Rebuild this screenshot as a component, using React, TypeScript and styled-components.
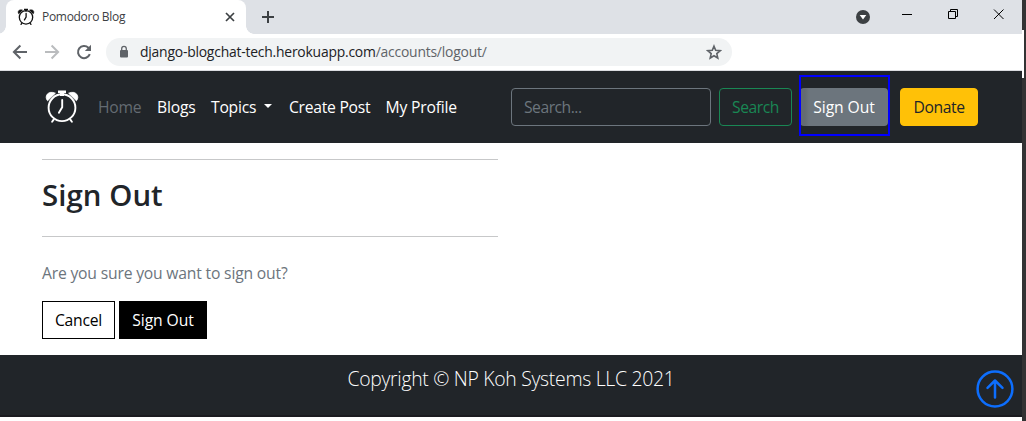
import React from "react";
import styled, { createGlobalStyle, css } from "styled-components";

const GlobalStyle = createGlobalStyle`
  *, *::before, *::after { box-sizing: border-box; }
  body {
    margin: 0;
    overflow: hidden;
    background: #333334;
    color: #212529;
    font-family: "Segoe UI", "Open Sans", "Noto Sans", sans-serif;
    font-size: 15.7px;
    line-height: 24px;
    letter-spacing: -0.2px;
  }
  button, input { font: inherit; letter-spacing: inherit; }
`;

const Desktop = styled.div`
  position: relative;
  width: 1026px;
  height: 421px;
  overflow: hidden;
  background: #333334;
`;

const BrowserWindow = styled.div`
  width: 1022px;
  height: 421px;
  display: flex;
  flex-direction: column;
  background: #fff;
`;

const WindowEdge = styled.div`
  position: absolute;
  top: 30px;
  left: 1022px;
  width: 2px;
  height: 48px;
  background: #fff;
`;

const TabStrip = styled.div`
  height: 34px;
  flex: none;
  display: flex;
  align-items: flex-start;
  background: #dee1e6;
`;

const Tab = styled.div`
  position: relative;
  width: 240px;
  height: 34px;
  margin-left: 6px;
  padding: 0 10px 0 11px;
  display: flex;
  align-items: center;
  background: #fff;
  border-radius: 8px 8px 0 0;
  &::before, &::after {
    content: "";
    position: absolute;
    bottom: 0;
    width: 8px;
    height: 8px;
  }
  &::before {
    left: -8px;
    background: radial-gradient(circle at 0 0, #dee1e6 7.5px, #fff 8px);
  }
  &::after {
    right: -8px;
    background: radial-gradient(circle at 100% 0, #dee1e6 7.5px, #fff 8px);
  }
`;

const TabTitle = styled.span`
  flex: 1;
  margin-left: 7px;
  font-size: 12px;
  letter-spacing: -0.3px;
  color: #3c4043;
  white-space: nowrap;
`;

const NewTab = styled.div`
  display: flex;
  margin: 10px 0 0 15px;
`;

const WindowControls = styled.div`
  display: flex;
  margin-left: auto;
  padding: 8px 17px 0 0;
`;

const Toolbar = styled.div`
  height: 37px;
  flex: none;
  display: flex;
  align-items: center;
  padding-left: 11px;
  background: #fff;
  border-bottom: 1px solid #dadce0;
`;

const ToolbarIcons = styled.div`
  display: flex;
  gap: 14px;
  margin-right: 13px;
`;

const AddressBar = styled.div`
  width: 626px;
  height: 28px;
  padding: 0 10px 0 12px;
  display: flex;
  align-items: center;
  border-radius: 14px;
  background: #f1f3f4;
`;

const Url = styled.span`
  flex: 1;
  margin-left: 10px;
  font-size: 13.9px;
  letter-spacing: -0.21px;
  color: #202124;
  white-space: nowrap;
`;

const UrlPath = styled.span`
  color: #5f6368;
`;

const Navbar = styled.nav`
  height: 72px;
  flex: none;
  display: flex;
  align-items: center;
  padding: 0 44px 0 44px;
  background: #212529;
`;

const NavLinks = styled.div`
  display: flex;
  margin-left: 18px;
`;

const NavLink = styled.a<{ $width: number; $spacing: number; $active?: boolean }>`
  display: flex;
  align-items: center;
  width: ${(p) => p.$width}px;
  letter-spacing: ${(p) => p.$spacing}px;
  color: ${(p) => (p.$active ? "#646b72" : "#fff")};
  white-space: nowrap;
`;

const Caret = styled.span`
  margin: -2px 0 0 8px;
  border: 4.8px solid transparent;
  border-top-color: currentColor;
  border-bottom: 0;
`;

const SearchForm = styled.form`
  display: flex;
  gap: 8px;
  margin-left: auto;
`;

const SearchInput = styled.input`
  width: 200px;
  height: 38px;
  padding: 6px 12px;
  color: #fff;
  background: transparent;
  border: 1px solid #6c757d;
  border-radius: 4px;
  outline: 0;
  letter-spacing: -0.5px;
  &::placeholder { color: #6c757d; opacity: 1; }
`;

const variants = {
  success: css`color: #198754; border-color: #198754; border-radius: 4px;`,
  secondary: css`
    color: #fff;
    border-color: transparent;
    border-radius: 4px;
    background: linear-gradient(90deg, #646b72 0, #646b72 5px, #6c757d 9px) border-box;
  `,
  warning: css`color: #212529; border-color: #ffc107; background: #ffc107; border-radius: 4px;`,
  outline: css`color: #000; border-color: #000; background: #fff;`,
  dark: css`color: #fff; border-color: #000; background: #000;`,
};

const Button = styled.button<{ $variant: keyof typeof variants; $width: number; $spacing: number }>`
  flex: none;
  width: ${(p) => p.$width}px;
  height: 38px;
  padding: 0;
  text-align: center;
  letter-spacing: ${(p) => p.$spacing}px;
  white-space: nowrap;
  background: transparent;
  border: 1px solid;
  border-radius: 0;
  ${(p) => variants[p.$variant]}
`;

const Highlight = styled.div`
  position: relative;
  display: flex;
  margin: 0 12px 0 8px;
  &::after {
    content: "";
    position: absolute;
    inset: -13px -2px -10px -1px;
    border: 2px solid #0000ff;
  }
`;

const Content = styled.main`
  width: 498px;
  height: 212px;
  flex: none;
  padding: 16px 0 0 42px;
`;

const Rule = styled.hr`
  height: 1px;
  margin: 0;
  border: 0;
  background: #c7c8c9;
`;

const Title = styled.h2`
  height: 76px;
  margin: 0;
  padding-top: 17px;
  font-size: 29.4px;
  font-weight: 600;
  line-height: 36px;
  letter-spacing: 0.05px;
`;

const Question = styled.p`
  margin: 24px 0 16px;
  letter-spacing: -0.19px;
  color: #6c757d;
`;

const Actions = styled.div`
  display: flex;
  gap: 4px;
`;

const Footer = styled.footer`
  position: relative;
  height: 62px;
  flex: none;
  padding-top: 9px;
  background: #212529;
  border-bottom: 2px solid #1b1b20;
  color: #fff;
  font-size: 19.4px;
  font-weight: 300;
  line-height: 30px;
  letter-spacing: -0.3px;
  text-align: center;
`;

const BackToTop = styled.div`
  position: absolute;
  top: 15px;
  right: 8px;
  display: flex;
`;

function AlarmClock({ size, color, stroke }: { size: number; color: string; stroke: number }) {
  return (
    <svg width={size} height={size} viewBox="0 0 36 36" fill="none" stroke={color}>
      <circle cx="18" cy="18.7" r="13.4" strokeWidth={stroke} />
      <path d="M18.2 11v7.2l-3.3 5.5" strokeWidth={stroke} strokeLinecap="round" />
      <path d="M9.8 30.4l-1.7 2.4M26.2 30.4l1.7 2.4" strokeWidth={stroke} strokeLinecap="round" />
      <path d="M14 1.4h8v2.6h-2v3h-4V4h-2z" fill={color} stroke="none" />
      <path d="M3.6 11.8C-.2 7.6 4 .9 11.4 4.2zM32.4 11.8C36.2 7.6 32 .9 24.6 4.2z" fill={color} stroke={color} strokeWidth="0.8" />
    </svg>
  );
}

export default function App() {
  return (
    <>
      <GlobalStyle />
      <Desktop>
        <BrowserWindow>
          <TabStrip>
            <Tab>
              <AlarmClock size={18} color="#111" stroke={2.6} />
              <TabTitle>Pomodoro Blog</TabTitle>
              <svg width="12" height="12" viewBox="0 0 12 12" stroke="#3c4043" strokeWidth="1.7">
                <path d="M2 2l8 8M10 2l-8 8" />
              </svg>
            </Tab>
            <NewTab>
              <svg width="14" height="14" viewBox="0 0 14 14" stroke="#3c4043" strokeWidth="2">
                <path d="M7 1v12M1 7h12" />
              </svg>
            </NewTab>
            <WindowControls>
              <svg width="150" height="18" viewBox="0 0 150 18" fill="none" stroke="#000">
                <circle cx="8" cy="9" r="7" fill="#3c4043" stroke="none" />
                <path d="M4.7 7h6.6L8 11.4z" fill="#fff" stroke="none" />
                <path d="M47 6.5h10M93.5 3.5h7v7h-7zM95.5 3.5v-2h7v7h-2M139 1.5l9.5 9.5M148.5 1.5L139 11" />
              </svg>
            </WindowControls>
          </TabStrip>
          <Toolbar>
            <ToolbarIcons>
              <svg width="18" height="18" viewBox="0 0 18 18" fill="none" stroke="#5f6368" strokeWidth="2">
                <path d="M16 9H3M9.4 2.5L2.9 9l6.5 6.5" />
              </svg>
              <svg width="18" height="18" viewBox="0 0 18 18" fill="none" stroke="#babcbe" strokeWidth="2">
                <path d="M2 9h13M8.6 2.5L15.1 9l-6.5 6.5" />
              </svg>
              <svg width="18" height="18" viewBox="0 0 18 18" fill="none" stroke="#5f6368" strokeWidth="2">
                <path d="M14.8 11.2A6.1 6.1 0 1 1 13.4 4.7L15 6.2" />
                <path d="M16 1.8V8H9.8z" fill="#5f6368" stroke="none" />
              </svg>
            </ToolbarIcons>
            <AddressBar>
              <svg width="12" height="14" viewBox="0 0 12 14">
                <rect x="2" y="5" width="8" height="7.5" rx="1" fill="#5f6368" />
                <path d="M3.7 5.5V3.7a2.3 2.3 0 0 1 4.6 0v1.8" fill="none" stroke="#5f6368" strokeWidth="1.3" />
              </svg>
              <Url>
                django-blogchat-tech.herokuapp.com<UrlPath>/accounts/logout/</UrlPath>
              </Url>
              <svg width="16" height="16" viewBox="0 0 16 16" fill="none" stroke="#5f6368" strokeWidth="1.6">
                <path d="M8 2.2l1.7 4.1 4.5.4-3.4 2.9 1 4.4L8 11.7l-3.8 2.3 1-4.4-3.4-2.9 4.5-.4z" />
              </svg>
            </AddressBar>
          </Toolbar>
          <Navbar>
            <AlarmClock size={36} color="#fff" stroke={1.9} />
            <NavLinks>
              <NavLink $width={59} $spacing={-0.25} $active>Home</NavLink>
              <NavLink $width={54} $spacing={-0.2}>Blogs</NavLink>
              <NavLink $width={78} $spacing={-0.25}>Topics<Caret /></NavLink>
              <NavLink $width={96.5} $spacing={-0.27}>Create Post</NavLink>
              <NavLink $width={72.5} $spacing={-0.2}>My Profile</NavLink>
            </NavLinks>
            <SearchForm>
              <SearchInput placeholder="Search..." />
              <Button type="button" $variant="success" $width={73} $spacing={-0.45}>Search</Button>
            </SearchForm>
            <Highlight>
              <Button $variant="secondary" $width={88} $spacing={-0.1}>Sign Out</Button>
            </Highlight>
            <Button $variant="warning" $width={78} $spacing={-0.4}>Donate</Button>
          </Navbar>
          <Content>
            <Rule />
            <Title>Sign Out</Title>
            <Rule />
            <Question>Are you sure you want to sign out?</Question>
            <Actions>
              <Button $variant="outline" $width={73} $spacing={-0.25}>Cancel</Button>
              <Button $variant="dark" $width={88} $spacing={-0.1}>Sign Out</Button>
            </Actions>
          </Content>
          <Footer>
            Copyright © NP Koh Systems LLC 2021
            <BackToTop>
              <svg width="38" height="38" viewBox="0 0 38 38" fill="none" stroke="#0d6efd" strokeWidth="2.5">
                <circle cx="19" cy="19" r="17.4" />
                <path d="M19 27.5V11M11.5 17.8L19 10.5l7.5 7.3" strokeLinecap="round" strokeLinejoin="round" />
              </svg>
            </BackToTop>
          </Footer>
        </BrowserWindow>
        <WindowEdge />
      </Desktop>
    </>
  );
}
